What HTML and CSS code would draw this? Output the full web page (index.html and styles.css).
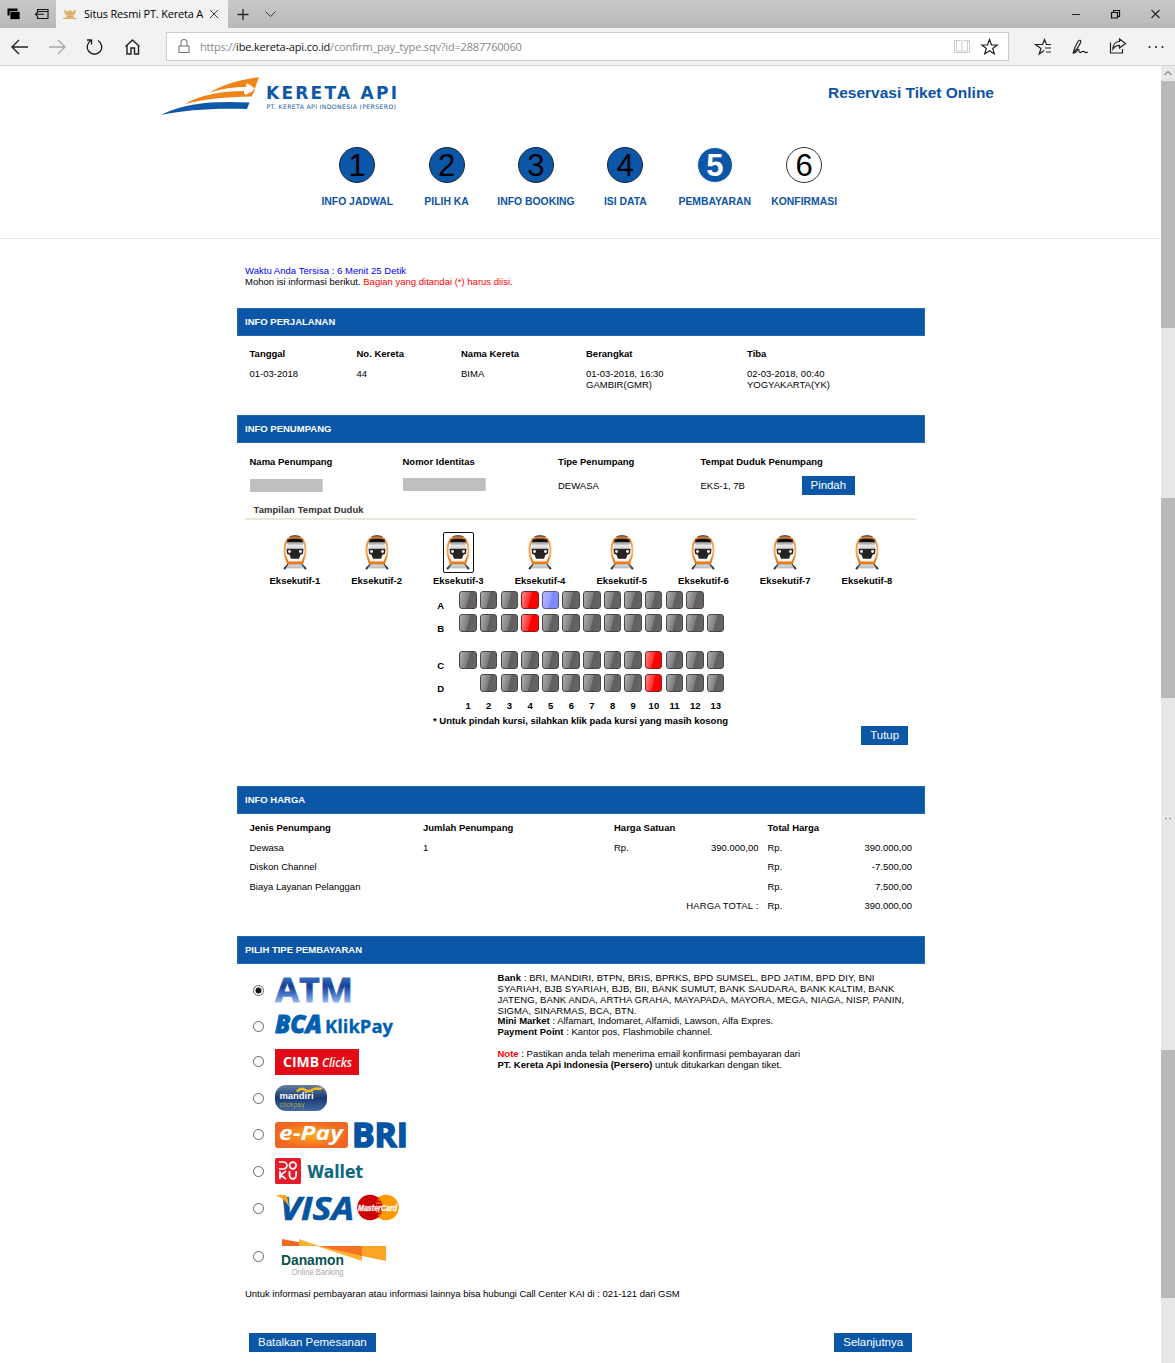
FILE: index.html
```html
<!DOCTYPE html>
<html lang="id">
<head>
<meta charset="utf-8">
<title>Situs Resmi PT. Kereta Api</title>
<link rel="stylesheet" href="styles.css">
</head>
<body>
<svg class="defs" width="0" height="0">
  <defs>
    <linearGradient id="steel" x1="0" y1="0" x2="0" y2="1"><stop offset="0" stop-color="#888"/><stop offset=".6" stop-color="#eee"/><stop offset="1" stop-color="#ccc"/></linearGradient>
    <linearGradient id="shell" x1="0" y1="0" x2="1" y2="0"><stop offset="0" stop-color="#fbb36a"/><stop offset=".15" stop-color="#ea7a18"/><stop offset=".85" stop-color="#ea7a18"/><stop offset="1" stop-color="#fbc48c"/></linearGradient>
    <symbol id="train" viewBox="0 0 26 36">
      <path d="M6.500 30.500L2 35M19.500 30.500L24 35" stroke="#333" stroke-width="2"/>
      <path d="M7 30h12l3 4H4z" fill="#ccc" stroke="#999" stroke-width=".5"/>
      <path d="M6.500 3.500C8 0 18 0 19.500 3.500z" fill="#555"/>
      <path d="M5 4.500C8 1.800 18 1.800 21 4.500 24.500 9 25.200 15 24 22l-3 8H5L2 22C.8 15 1.500 9 5 4.500z" fill="url(#shell)"/>
      <path d="M5.500 6c4-2 11-2 15 0 2 4.500 2.500 10 1.700 15l-2.700 6.500H6.500L3.800 21C3 16 3.500 10.500 5.500 6z" fill="#fff"/>
      <path d="M5.500 5.500c4-1.500 11-1.500 15 0l.8 4.500-1.500-2H6.200l-1.500 2z" fill="#111"/>
      <path d="M5.500 8h15l.7 6.500H4.800z" fill="url(#steel)"/>
      <path d="M4.500 14.800h17l-.5 5-2.500 1-1.500 4h-8l-1.500-4-2.500-1z" fill="#262321"/>
      <circle cx="7.500" cy="17.500" r="1.400" fill="#fff"/><circle cx="18.500" cy="17.500" r="1.400" fill="#fff"/>
      <path d="M6.500 27.300h13" stroke="#f3b27a" stroke-width="1"/>
    </symbol>
  </defs>
</svg>

<div class="tabbar">
  <svg class="tabtools" width="56" height="28" viewBox="0 0 56 28"><path d="M7.500 8.500h10v7h-10z" fill="#000"/><path d="M10 11.500h10V19.500H10z" fill="#000" stroke="#bbb" stroke-width=".8"/><path d="M37.500 12V9.500h10.500v9H37.500V16M37.500 11.500H48M44 14.300h-8.500M38 12l-2.600 2.300 2.600 2.300" fill="none" stroke="#111" stroke-width="1.100"/></svg>
  <div class="tab">
    <svg width="14" height="12" viewBox="0 0 14 12"><path d="M1 2c2 0 3 1 4 2l1-2h2l1 2c1-1 2-2 4-2 0 3-1 5-3 6l2 2H2l2-2C2 7 1 5 1 2z" fill="#e4b878"/><path d="M5 4l2 2 2-2M4 8.500h6M0 10.500h14" stroke="#d3a050" stroke-width=".8" fill="none"/></svg>
    <span class="tabtitle">Situs Resmi PT. Kereta A</span>
    <svg width="10" height="10" viewBox="0 0 10 10"><path d="M1 1l8 8M9 1L1 9" stroke="#333"/></svg>
  </div>
  <svg width="60" height="28" viewBox="0 0 60 28"><path d="M9.500 14.500h11M15 9v11" stroke="#222" stroke-width="1.300"/><path d="M37.500 11.500l5 5 5-5" fill="none" stroke="#333"/></svg>
  <svg class="wincontrols" width="115" height="28" viewBox="0 0 115 28"><path d="M12 14.500h8" stroke="#222"/><path d="M51.500 12.500h6v5.500h-6zM53.500 12.500v-2h6v6h-2" fill="none" stroke="#111" stroke-width="1.200"/><path d="M91.500 10l8 8M99.500 10l-8 8" stroke="#222" stroke-width="1.100"/></svg>
</div>

<div class="toolbar">
  <svg width="166" height="37" viewBox="0 0 166 37"><g fill="none" stroke="#222" stroke-width="1.400"><path d="M28 19H12M19 12l-7 7 7 7"/><path d="M49 19h16M58 12l7 7-7 7" stroke="#aaa"/><path d="M91 12.500a7.300 7.300 0 1 0 7 0M91.500 16.500V12H87"/><path d="M125.500 18.500l7-6.500 7 6.500M127 17.500V26h4v-6h3.500v6h4v-8.500"/></g></svg>
  <div class="address">
    <svg width="33" height="27" viewBox="0 0 33 27"><path d="M12 13h10v6.500H12zM14 13V9.500a3 3 0 0 1 6 0V13" fill="none" stroke="#777" stroke-width="1.100"/></svg>
    <span class="url">https://<b>ibe.kereta-api.co.id</b>/confirm_pay_type.sqv?id=2887760060</span>
    <svg class="urlicons" width="60" height="27" viewBox="0 0 60 27"><path d="M6.500 7.500h6.500l1 1 1-1h6.500v12H15l-1 1-1-1H6.500zM14 8.500v11M8.500 7.500v10.500h4l1.500 1 1.500-1h4V7.500" fill="none" stroke="#ccc"/><path d="M41.500 6.500l2 5.300 5.700.2-4.500 3.500 1.600 5.400-4.800-3.100-4.800 3.100 1.600-5.400-4.500-3.500 5.700-.2z" fill="none" stroke="#222" stroke-width="1.200"/></svg>
  </div>
  <svg width="166" height="37" viewBox="0 0 166 37"><g fill="none" stroke="#222" stroke-width="1.200"><path d="M42 16.500h-4.500l-2-5-2 5h-7l5.500 4-1.800 5.500 5-3.500M36 20h6M37 24h5"/><path d="M64 25.500c1-4 3-9 5-12 1.500-2 3.500-1.500 2.500 1-1.500 4-4 7-6.500 10M64 25.500c3 0 3.500-2 5-4 2-1 0 3 2 3s2-2 4-1c2 1.500 2 1.500 4 .5"/><path d="M101.500 14.500v10.500h12v-4M104 21c0-5 3-7.500 6.500-7.500V11l6 4.500-6 4.500v-2.700c-3 0-5 1-6.500 3.700z"/></g><g fill="#222"><circle cx="140.500" cy="19" r="1"/><circle cx="147" cy="19" r="1"/><circle cx="153.500" cy="19" r="1"/></g></svg>
</div>

<div class="viewport">
<main class="page">
  <header class="masthead">
    <svg class="logo" width="240" height="42" viewBox="0 0 240 42">
      <path d="M48 17C62 8 78 4 98 1L93 15 85 8v4C72 11 60 13 48 17z" fill="#f08519"/>
      <path d="M24 28C39 19 59 15 84 15v4l10-5-3.500 6.500C64 21 44 23 24 28z" fill="#f08519"/>
      <path d="M48 17.300C61 12.500 73 11 86 11V7l8 5.500-11 5.500v-4C72 13.500 60 14.500 48 17.300z" fill="#fff"/>
      <path d="M0 39C25 26 55 25 88.500 26.500L86 33C50 32 25 34 0 39z" fill="#0d58a8"/>
      <g fill="#0d58a8"><text x="105" y="23.300" font-family="DejaVu Sans" font-weight="bold" font-size="17" textLength="131">KERETA API</text><text x="105.500" y="33" font-family="DejaVu Sans" font-size="6.200" textLength="129.500">PT. KERETA API INDONESIA (PERSERO)</text></g>
    </svg>
    <h1>Reservasi Tiket Online</h1>
  </header>
  <ol class="steps">
    <li><span class="dot">1</span>INFO JADWAL</li>
    <li><span class="dot">2</span>PILIH KA</li>
    <li><span class="dot">3</span>INFO BOOKING</li>
    <li><span class="dot">4</span>ISI DATA</li>
    <li><span class="dot current">5</span>PEMBAYARAN</li>
    <li><span class="dot next">6</span>KONFIRMASI</li>
  </ol>

  <div class="content">
    <div class="notice"><span class="time">Waktu Anda Tersisa : 6 Menit 25 Detik</span><br>Mohon isi informasi berikut. <span class="red">Bagian yang ditandai (*) harus diisi.</span></div>

    <section class="trip">
      <h2>INFO PERJALANAN</h2>
      <div class="grid trip-grid">
        <b>Tanggal</b><b>No. Kereta</b><b>Nama Kereta</b><b>Berangkat</b><b>Tiba</b>
        <span>01-03-2018</span><span>44</span><span>BIMA</span><span>01-03-2018, 16:30<br>GAMBIR(GMR)</span><span>02-03-2018, 00:40<br>YOGYAKARTA(YK)</span>
      </div>
    </section>

    <section class="passenger">
      <h2>INFO PENUMPANG</h2>
      <div class="grid pass-grid">
        <b>Nama Penumpang</b><b>Nomor Identitas</b><b>Tipe Penumpang</b><b class="wide">Tempat Duduk Penumpang</b>
        <span class="mask"></span><span class="mask id"></span><span>DEWASA</span><span>EKS-1, 7B</span><button>Pindah</button>
      </div>
      <h3>Tampilan Tempat Duduk</h3>
      <div class="coaches">
        <div><span class="icon"><svg><use href="#train"/></svg></span>Eksekutif-1</div>
        <div><span class="icon"><svg><use href="#train"/></svg></span>Eksekutif-2</div>
        <div><span class="icon selected"><svg><use href="#train"/></svg></span>Eksekutif-3</div>
        <div><span class="icon"><svg><use href="#train"/></svg></span>Eksekutif-4</div>
        <div><span class="icon"><svg><use href="#train"/></svg></span>Eksekutif-5</div>
        <div><span class="icon"><svg><use href="#train"/></svg></span>Eksekutif-6</div>
        <div><span class="icon"><svg><use href="#train"/></svg></span>Eksekutif-7</div>
        <div><span class="icon"><svg><use href="#train"/></svg></span>Eksekutif-8</div>
      </div>
      <div class="seats">
        <div class="row"><b>A</b><i></i><i></i><i></i><i class="taken"></i><i class="free"></i><i></i><i></i><i></i><i></i><i></i><i></i><i></i></div>
        <div class="row aisle"><b>B</b><i></i><i></i><i></i><i class="taken"></i><i></i><i></i><i></i><i></i><i></i><i></i><i></i><i></i><i></i></div>
        <div class="row"><b>C</b><i></i><i></i><i></i><i></i><i></i><i></i><i></i><i></i><i></i><i class="taken"></i><i></i><i></i><i></i></div>
        <div class="row"><b>D</b><i class="none"></i><i></i><i></i><i></i><i></i><i></i><i></i><i></i><i></i><i class="taken"></i><i></i><i></i><i></i></div>
        <div class="row numbers"><span></span><span>1</span><span>2</span><span>3</span><span>4</span><span>5</span><span>6</span><span>7</span><span>8</span><span>9</span><span>10</span><span>11</span><span>12</span><span>13</span></div>
      </div>
      <p class="hint">* Untuk pindah kursi, silahkan klik pada kursi yang masih kosong</p>
      <div class="close"><button>Tutup</button></div>
    </section>

    <section class="price">
      <h2>INFO HARGA</h2>
      <div class="grid price-grid">
        <b>Jenis Penumpang</b><b>Jumlah Penumpang</b><b class="pair">Harga Satuan</b><b class="pair">Total Harga</b>
        <span>Dewasa</span><span>1</span><span>Rp.</span><span class="num">390.000,00</span><span>Rp.</span><span class="num">390.000,00</span>
        <span class="four">Diskon Channel</span><span>Rp.</span><span class="num">-7.500,00</span>
        <span class="four">Biaya Layanan Pelanggan</span><span>Rp.</span><span class="num">7.500,00</span>
        <span class="four num total">HARGA TOTAL :</span><span>Rp.</span><span class="num">390.000,00</span>
      </div>
    </section>

    <section>
      <h2>PILIH TIPE PEMBAYARAN</h2>
      <div class="payment">
        <div class="methods">
          <label class="m1"><input type="radio" name="pay" checked>
            <svg width="80" height="28" viewBox="0 0 80 28"><defs><linearGradient id="atm" gradientUnits="userSpaceOnUse" x1="0" y1="1" x2="0" y2="27"><stop offset="0" stop-color="#3c72c4"/><stop offset=".35" stop-color="#123f96"/><stop offset=".65" stop-color="#4172c4"/><stop offset="1" stop-color="#9bbcf0"/></linearGradient></defs><text x="0" y="26" font-family="Open Sans" font-weight="bold" font-size="34" fill="url(#atm)" stroke="url(#atm)" stroke-width=".8" textLength="78" lengthAdjust="spacingAndGlyphs">ATM</text></svg></label>
          <label class="m2"><input type="radio" name="pay">
            <svg width="120" height="28" viewBox="0 0 120 28"><g fill="#0060af"><text x="0" y="20.500" font-family="Open Sans" font-weight="800" font-style="italic" font-size="25" stroke="#0060af" stroke-width=".8" textLength="47" lengthAdjust="spacingAndGlyphs">BCA</text><text x="50" y="20.500" font-family="Open Sans" font-weight="bold" font-size="18" stroke="#0060af" stroke-width=".3" textLength="68" lengthAdjust="spacingAndGlyphs">KlikPay</text></g></svg></label>
          <label class="m3"><input type="radio" name="pay">
            <svg width="84" height="26" viewBox="0 0 84 26"><path d="M0 0h84v26H0z" fill="#e30b17"/><g fill="#fff"><text x="8" y="18" font-family="Open Sans" font-weight="bold" font-size="13.500" textLength="36" lengthAdjust="spacingAndGlyphs">CIMB</text><text x="47" y="18" font-family="Open Sans" font-weight="600" font-style="italic" font-size="13" textLength="30" lengthAdjust="spacingAndGlyphs">Clicks</text></g></svg></label>
          <label class="m4"><input type="radio" name="pay">
            <svg width="52" height="28" viewBox="0 0 52 28"><defs><linearGradient id="man" x1="0" y1="0" x2="0" y2="1"><stop offset="0" stop-color="#6780a0"/><stop offset=".5" stop-color="#173a73"/><stop offset="1" stop-color="#4569a2"/></linearGradient></defs><rect y="1" width="52" height="26" rx="11" fill="url(#man)"/><path d="M22 7.500c4-4 6-3 9-1s5 0 8-1.500 4 1 8-1" fill="none" stroke="#fbbd18" stroke-width="2.500"/><text x="4.500" y="15" fill="#fff" font-family="Liberation Sans" font-weight="bold" font-size="8.500" textLength="34" lengthAdjust="spacingAndGlyphs">mandiri</text><text x="4.500" y="22.500" fill="#a5a84a" font-family="Liberation Sans" font-size="6.500" textLength="25">clickpay</text></svg></label>
          <label class="m5"><input type="radio" name="pay">
            <svg width="134" height="28" viewBox="0 0 134 28"><defs><radialGradient id="epay"><stop offset="0" stop-color="#fcae1c"/><stop offset="1" stop-color="#f16522"/></radialGradient></defs><rect y="1" width="73" height="26" rx="3" fill="url(#epay)"/><text x="4" y="18.500" fill="#fff" font-family="Open Sans" font-weight="bold" font-style="italic" font-size="20" textLength="64" lengthAdjust="spacingAndGlyphs">e-Pay</text><text x="77" y="26" fill="#0454a3" stroke="#0454a3" stroke-width="1.600" font-family="Open Sans" font-weight="bold" font-size="34" textLength="56" lengthAdjust="spacingAndGlyphs">BRI</text></svg></label>
          <label class="m6"><input type="radio" name="pay">
            <svg width="90" height="28" viewBox="0 0 90 28"><rect y="1" width="26" height="26" rx="1.500" fill="#e51d2a"/><g fill="none" stroke="#fff" stroke-width="1.700"><path d="M4 5h4.500a3.500 3.500 0 0 1 0 7H4M5 14v8M11 14l-5.500 4 5.500 4M14.500 14v4.500a3.300 3.300 0 0 0 6.600 0V14"/><circle cx="17.800" cy="8.500" r="3.300"/></g><text x="32" y="20.500" fill="#116782" font-family="DejaVu Sans" font-weight="bold" font-size="18" textLength="56" lengthAdjust="spacingAndGlyphs">Wallet</text></svg></label>
          <label class="m7"><input type="radio" name="pay">
            <svg width="126" height="28" viewBox="0 0 126 28"><text x="5" y="25.500" fill="#0754a0" stroke="#0754a0" stroke-width=".7" font-family="Open Sans" font-weight="bold" font-style="italic" font-size="33" textLength="74" lengthAdjust="spacingAndGlyphs">VISA</text><path d="M0 1h9c3 0 4 2 5 12C11 7 6 3 0 1z" fill="#f7a51c"/><circle cx="111" cy="13.500" r="12.800" fill="#f90"/><circle cx="95" cy="13.500" r="12.800" fill="#c00"/><path d="M102 6h6M101 9h6M101 18h7M103 21h5" stroke="#f90"/><text x="83" y="16.500" fill="#fff" stroke="#fff" stroke-width=".3" font-family="Liberation Sans" font-weight="bold" font-style="italic" font-size="8.500" textLength="39" lengthAdjust="spacingAndGlyphs">MasterCard</text></svg></label>
          <label class="m8"><input type="radio" name="pay">
            <svg width="112" height="40" viewBox="0 0 112 40"><path d="M7 2l37 7H7z" fill="#f16822"/><path d="M24 2l20 7H24z" fill="#fbb034"/><path d="M40 8.500L87 24V15z" fill="#fcb034"/><path d="M44 9h43v10z" fill="#f47224"/><path d="M87 9h24v15l-24-5z" fill="#fba527"/><text x="6" y="27.500" fill="#08534d" font-family="Liberation Sans" font-weight="bold" font-size="14.500" textLength="63" lengthAdjust="spacingAndGlyphs">Danamon</text><text x="16.500" y="38" fill="#aaa" font-family="Liberation Sans" font-size="9" textLength="52" lengthAdjust="spacingAndGlyphs">Online Banking</text></svg></label>
        </div>
        <div class="info"><div class="banks"><b>Bank</b> : BRI, MANDIRI, BTPN, BRIS, BPRKS, BPD SUMSEL, BPD JATIM, BPD DIY, BNI<br>SYARIAH, BJB SYARIAH, BJB, BII, BANK SUMUT, BANK SAUDARA, BANK KALTIM, BANK<br>JATENG, BANK ANDA, ARTHA GRAHA, MAYAPADA, MAYORA, MEGA, NIAGA, NISP, PANIN,<br>SIGMA, SINARMAS, BCA, BTN.</div><b>Mini Market</b> : Alfamart, Indomaret, Alfamidi, Lawson, Alfa Expres.<br><b>Payment Point</b> : Kantor pos, Flashmobile channel.<br><br><b class="red">Note</b> : Pastikan anda telah menerima email konfirmasi pembayaran dari<br><b>PT. Kereta Api Indonesia (Persero)</b> untuk ditukarkan dengan tiket.</div>
      </div>
      <p class="contact">Untuk informasi pembayaran atau informasi lainnya bisa hubungi Call Center KAI di : 021-121 dari GSM</p>
      <div class="actions"><button>Batalkan Pemesanan</button><button>Selanjutnya</button></div>
    </section>
  </div>
</main>
<aside class="scrollbar">
  <svg width="14" height="15" viewBox="0 0 14 15"><path d="M3.500 9L7 5.500 10.500 9" fill="none" stroke="#888" stroke-width="1.200"/></svg>
  <div class="thumb t1"></div><div class="thumb t2"></div><span class="dots">··</span><div class="thumb t3"></div>
</aside>
</div>
</body>
</html>
```
FILE: styles.css
```css
* { box-sizing: border-box; }
body { margin: 0; width: 1175px; height: 1363px; overflow: hidden; background: #fff; color: #000; font-family: "Liberation Sans", Arial, sans-serif; font-size: 9.5px; line-height: 11px; }
svg { display: block; flex: none; overflow: visible; }
.defs { position: absolute; }
h1, h2, h3, p, ol { margin: 0; padding: 0; }
.red { color: #f00; }

/* browser window */
.tabbar { display: flex; height: 28px; background: linear-gradient(#c9c9c9, #b9b9b9); }
.tab { display: flex; align-items: center; width: 172px; padding-left: 7px; background: #f2f2f2; }
.tabtitle { width: 118px; margin: 0 7px; white-space: nowrap; font: 11px/16px "Open Sans", sans-serif; letter-spacing: -.18px; }
.wincontrols { margin-left: auto; }
.toolbar { display: flex; height: 38px; background: #f2f2f2; border-bottom: 1px solid #d4d4d4; }
.address { display: flex; align-items: center; width: 843px; height: 29px; margin-top: 4px; background: #fff; border: 1px solid #ccc; }
.url { color: #888; font: 11px/16px "Open Sans", sans-serif; letter-spacing: -.18px; white-space: nowrap; }
.url b { color: #111; font-weight: 400; }
.urlicons { margin-left: auto; }
.viewport { display: flex; height: 1297px; }
.page { width: 1161px; }
.scrollbar { display: flex; flex-direction: column; align-items: center; width: 14px; background: #e8e8e8; }
.thumb { width: 14px; background: #b9b9b9; }
.t1 { height: 247px; }
.t2 { height: 200px; margin-top: 170px; }
.dots { height: 11px; margin: 115px 0 226px; color: #666; font-size: 12px; }
.t3 { height: 248px; }

/* masthead and progress */
.masthead { display: flex; justify-content: space-between; height: 72px; padding: 10px 167px 0 161px; }
h1 { padding-top: 7px; color: #0d53a5; font-size: 15.5px; line-height: 20px; }
.steps { display: flex; height: 101px; padding: 9px 0 0 312.5px; border-bottom: 1px solid #e6e6da; list-style: none; color: #0d53a5; font-size: 10.4px; font-weight: bold; }
.steps li { display: flex; flex-direction: column; align-items: center; width: 89.4px; white-space: nowrap; }
.dot { width: 36px; height: 36px; margin-bottom: 13px; border: 1px solid #17263a; border-radius: 50%; background: #0b56a7; color: #000; font-size: 31px; font-weight: 400; line-height: 36px; text-align: center; }
.current { border-color: #fff; color: #fff; font-weight: bold; }
.next { border-color: #333; background: #fff; }

/* booking sections */
.content { width: 688.5px; margin-left: 236.5px; }
.notice { height: 69px; padding: 26px 8.5px 0; white-space: nowrap; }
.time { color: #00f; letter-spacing: .03px; }
h2 { height: 28px; padding-left: 7.5px; background: #0b56a7; border: 1px solid #2367b0; color: #fff; font-size: 9.5px; line-height: 26px; }
.grid { display: grid; padding-left: 13px; white-space: nowrap; }
.trip { height: 107px; }
.trip-grid { grid-template-columns: 107px 104.5px 125px 161px 1fr; padding-top: 12px; row-gap: 9px; }
.passenger { height: 371px; }
.pass-grid { grid-template-columns: 153px 155.5px 142.5px 101px 1fr; grid-template-rows: 24px 18px; padding-top: 9px; align-items: center; }
.pass-grid b { align-self: start; padding-top: 4px; }
.wide { grid-column: span 2; }
.mask { width: 73px; height: 13px; background: #bfbfbf; border-right: 1px solid #cfd5dc; }
.mask.id { width: 83px; margin-top: -2px; }
button { justify-self: start; height: 19px; padding: 0 9px; border: 0; background: #0b56a7; color: #fff; font: 11.5px/19px "Liberation Sans", Arial, sans-serif; letter-spacing: -.04px; white-space: nowrap; }
h3 { height: 26px; margin: 0 9px 0 8.5px; padding: 10px 0 0 8.5px; border-bottom: 2px solid #e8e8d9; color: #333; font-size: 9.5px; line-height: 11px; letter-spacing: .06px; }
.coaches { display: flex; padding: 12px 0 0 17.5px; font-weight: bold; }
.coaches div { display: flex; flex-direction: column; align-items: center; width: 81.72px; }
.icon { display: flex; justify-content: center; width: 31px; height: 41px; padding-top: 1px; margin-bottom: 2px; border: 1px solid transparent; border-radius: 2px; }
.icon svg { width: 26px; height: 36px; }
.selected { border-color: #111; }
.seats { padding: 5px 0 0 187.3px; }
.row { display: flex; height: 23px; }
.row b { width: 34px; padding-top: 9px; text-align: center; }
.row i { width: 17.5px; height: 18px; margin: 0 1.575px; border: 1px solid #484848; border-radius: 3px; background: linear-gradient(105deg, #b0b0b0 0, #7c7c7c 48%, #625e5d 52%, #6a6665 100%); }
.row .taken { border-color: #822; background: linear-gradient(105deg, #ff8a8a 0, #ff2a2a 48%, #f00 52%); }
.row .free { border-color: #55a; background: linear-gradient(105deg, #b5bbff 0, #959dff 48%, #7f8aff 52%); }
.row .none { visibility: hidden; }
.aisle { height: 37px; }
.numbers { height: 18px; padding-top: 3px; font-weight: bold; }
.numbers span { width: 20.65px; text-align: center; }
.numbers span:first-child { width: 34px; }
.hint { padding-left: 196.5px; font-weight: bold; white-space: nowrap; letter-spacing: -.01px; }
.close { display: flex; justify-content: flex-end; padding-right: 17px; }
.price { height: 150px; }
.price-grid { grid-template-columns: 173.5px 191px 50px 103.5px 50px 94.5px; grid-template-rows: repeat(5, 19.5px); padding-top: 4px; line-height: 19px; }
.pair { grid-column: span 2; }
.four { grid-column: span 4; }
.num { text-align: right; }
.price-grid > .num:nth-child(8), .four.num { padding-right: 9px; }
.total { letter-spacing: .15px; }
.payment { display: flex; height: 324px; }
.methods { width: 261px; padding-top: 8px; }
.methods label { display: flex; align-items: center; }
.methods input { appearance: none; width: 11px; height: 11px; margin: 0 11px 0 16.5px; border: 1px solid #666; border-radius: 50%; background: #fff; }
.methods input:checked { background: radial-gradient(circle, #111 0 2.7px, #fff 3.3px); }
.m1, .m4, .m5, .m6, .m7 { height: 36.7px; }
.m2 { height: 35px; }
.m3 { height: 36px; }
.m8 { height: 61px; }
.info { padding-top: 9px; line-height: 10.85px; white-space: nowrap; }
.banks { letter-spacing: .07px; }
.contact { padding-left: 8.5px; white-space: nowrap; letter-spacing: -.02px; }
.actions { display: flex; justify-content: space-between; padding: 34px 13px 0 12.5px; }
```
